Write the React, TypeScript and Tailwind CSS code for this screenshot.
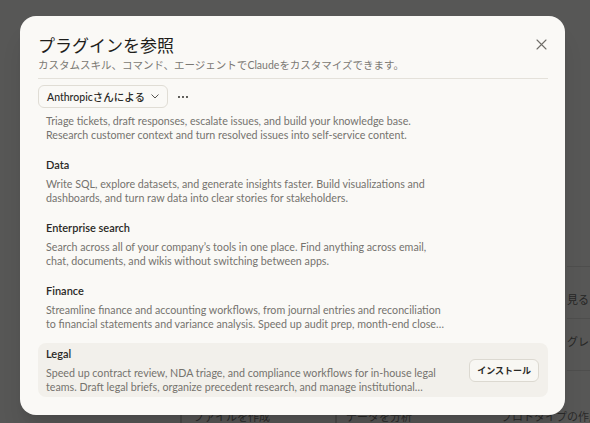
import React, { useLayoutEffect, useRef } from "react";

const latin = { fontFamily: '"Lato", "Noto Sans CJK JP", sans-serif' };
const cjk = { fontFamily: '"Noto Sans CJK JP", sans-serif' };

type Item = { title: string; lines: [string, string]; highlight?: boolean };

const items: Item[] = [
  {
    title: "Customer support",
    lines: [
      "Triage tickets, draft responses, escalate issues, and build your knowledge base.",
      "Research customer context and turn resolved issues into self-service content.",
    ],
  },
  {
    title: "Data",
    lines: [
      "Write SQL, explore datasets, and generate insights faster. Build visualizations and",
      "dashboards, and turn raw data into clear stories for stakeholders.",
    ],
  },
  {
    title: "Enterprise search",
    lines: [
      "Search across all of your company’s tools in one place. Find anything across email,",
      "chat, documents, and wikis without switching between apps.",
    ],
  },
  {
    title: "Finance",
    lines: [
      "Streamline finance and accounting workflows, from journal entries and reconciliation",
      "to financial statements and variance analysis. Speed up audit prep, month-end close…",
    ],
  },
  {
    title: "Legal",
    lines: [
      "Speed up contract review, NDA triage, and compliance workflows for in-house legal",
      "teams. Draft legal briefs, organize precedent research, and manage institutional…",
    ],
    highlight: true,
  },
];

function PluginRow({ item }: { item: Item }) {
  return (
    <div
      className={
        "flex items-center justify-between rounded-lg px-2 pt-[4px] pb-[3px] " +
        (item.highlight ? "bg-[#f2f0eb]" : "")
      }
    >
      <div className="w-[410px]">
        <div className="text-[11px] leading-[14px] font-semibold text-[#2a2926]">{item.title}</div>
        <div className="mt-[5px] text-[10.7px] leading-[14px] text-[#75736e]">
          <div className="whitespace-nowrap">{item.lines[0]}</div>
          <div className="whitespace-nowrap">{item.lines[1]}</div>
        </div>
      </div>
      {item.highlight && (
        <button
          className="mr-[1px] h-[23px] rounded-md border border-[#dcd9d1] bg-[#f8f7f3] px-[7px] text-[9px] font-semibold text-[#2a2926]"
          style={cjk}
        >
          インストール
        </button>
      )}
    </div>
  );
}

function BackgroundPage() {
  return (
    <div className="flex h-full flex-col">
      <div className="flex flex-1 justify-end">
        <div className="flex w-[23px] flex-col pt-[266px] text-[11px] leading-[14px] text-[#262625]" style={cjk}>
          <div className="h-[52px] border-t border-[#4e4e4d] pt-[25px] whitespace-nowrap">見るま</div>
          <div className="h-[52px] border-t border-[#4e4e4d] pt-[15px] whitespace-nowrap">グレー</div>
          <div className="border-t border-[#4e4e4d]" />
        </div>
      </div>
      <div className="flex h-[14px] items-start pl-[180px] text-[11px] leading-[14px] text-[#2a2a29]" style={cjk}>
        <div className="mt-[3px] h-[12px] w-[22px] border border-[#484847]" />
        <span className="ml-[11px] whitespace-nowrap">ファイルを作成</span>
        <div className="ml-[65px] mt-[3px] h-[12px] w-[14px] border border-[#484847]" />
        <span className="ml-[9px] whitespace-nowrap">データを分析</span>
        <span className="ml-[89px] whitespace-nowrap">プロトタイプの作成</span>
      </div>
    </div>
  );
}

export default function App() {
  const scrollRef = useRef<HTMLDivElement>(null);
  useLayoutEffect(() => {
    const el = scrollRef.current;
    if (el) el.scrollTop = el.scrollHeight;
  }, []);

  return (
    <div className="relative h-[423px] w-[590px] overflow-hidden bg-[#575756]" style={latin}>
      <BackgroundPage />

      {/* overlay + modal */}
      <div className="absolute inset-0 flex items-start pl-[20px] pt-[16px]">
        <div className="flex h-[399px] w-[545px] flex-col rounded-2xl bg-[#faf9f6] pl-[18px] pr-[17px] shadow-xl">
          <div className="flex items-start justify-between pt-[17px]">
            <h1 className="text-[17px] leading-[24px] font-normal text-[#1f1e1b]" style={cjk}>
              プラグインを参照
            </h1>
            <svg width="11" height="11" viewBox="0 0 11 11" className="mr-[1px] mt-[6px]">
              <path d="M1 1 L10 10 M10 1 L1 10" stroke="#6f6d68" strokeWidth="1.1" strokeLinecap="round" />
            </svg>
          </div>
          <p className="mt-[1px] text-[10.5px] leading-[14px] text-[#7a7873]" style={cjk}>
            カスタムスキル、コマンド、エージェントで<span style={latin}>Claude</span>をカスタマイズできます。
          </p>
          <div className="mt-[6px] h-px w-full bg-[#e4e1da]" />

          <div className="mt-[6px] flex items-center gap-[9px]">
            <button className="flex h-[23px] items-center gap-[6px] rounded-md border border-[#e0ddd5] bg-[#faf9f6] px-[8px] text-[10.5px] leading-[14px] font-medium text-[#2a2926]">
              <span className="whitespace-nowrap">Anthropicさんによる</span>
              <svg width="8" height="5" viewBox="0 0 8 5">
                <path d="M0.8 0.8 L4 4 L7.2 0.8" fill="none" stroke="#55534f" strokeWidth="1" strokeLinecap="round" strokeLinejoin="round" />
              </svg>
            </button>
            <svg width="12" height="4" viewBox="0 0 12 4">
              <circle cx="2" cy="2" r="1.05" fill="#3a3935" />
              <circle cx="6" cy="2" r="1.05" fill="#3a3935" />
              <circle cx="10" cy="2" r="1.05" fill="#3a3935" />
            </svg>
          </div>

          <div ref={scrollRef} className="mt-[4px] mb-[18px] flex-1 overflow-hidden">
            <div className="flex flex-col gap-[9px]">
              {items.map((it) => (
                <PluginRow key={it.title} item={it} />
              ))}
            </div>
          </div>
        </div>
      </div>
    </div>
  );
}
